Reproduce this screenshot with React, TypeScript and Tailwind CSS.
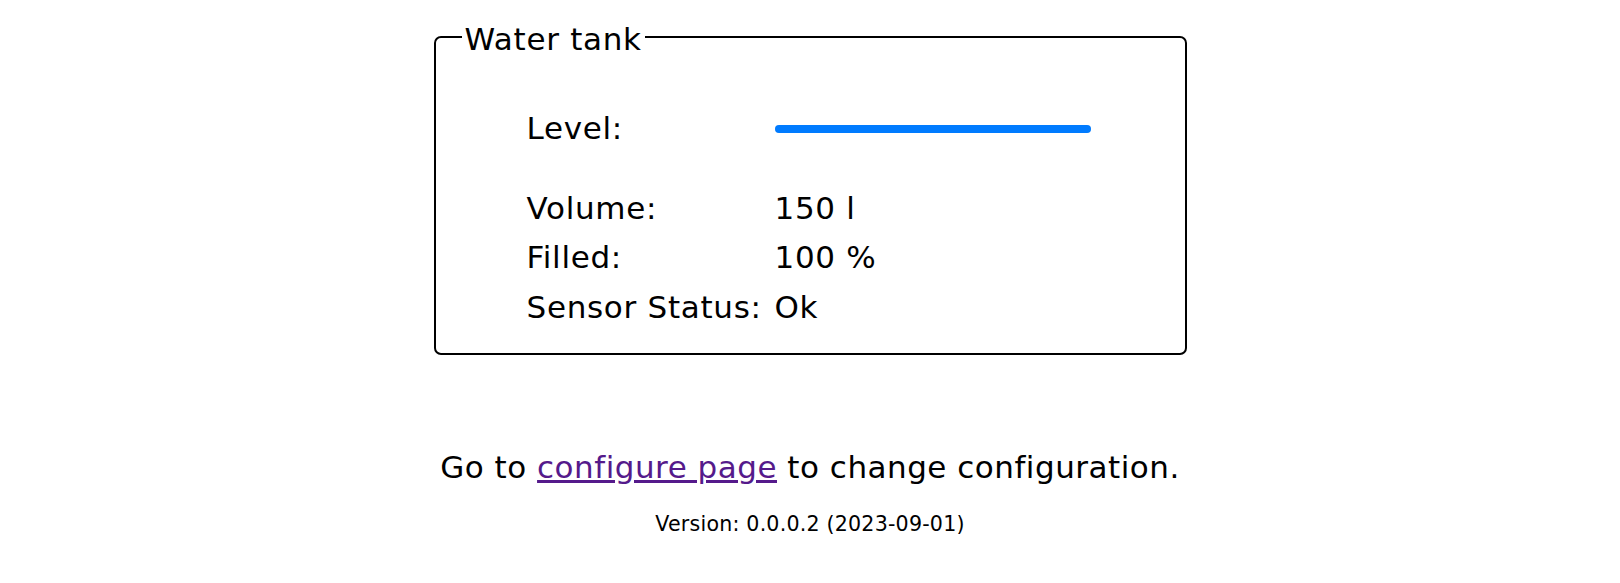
const rows = [
  { label: "Volume:", value: "150 l" },
  { label: "Filled:", value: "100 %" },
  { label: "Sensor Status:", value: "Ok" },
]

export default function App() {
  const level = 100
  return (
    <div className="min-h-[583px] bg-white pt-[19px] text-black font-['DejaVu_Sans',Verdana,sans-serif]">
      <fieldset className="mx-auto w-[753px] rounded-[7px] border-2 border-black p-0 pb-[21px]">
        <legend className="relative top-[2px] ml-[26px] px-[3px] text-[31px] leading-[36px] tracking-[0.7px]">
          Water tank
        </legend>
        <div className="pl-[91px] pt-[49px] text-[31px] leading-[49.5px] tracking-[0.7px]">
          <div className="grid grid-cols-[248px_auto] items-center">
            <div>Level:</div>
            <div className="h-[8px] w-[316px] rounded-full bg-[#e9ecef]">
              <div className="h-full rounded-full bg-[#007bff]" style={{ width: `${level}%` }} />
            </div>
          </div>
          <div className="mt-[30px] grid grid-cols-[248px_auto]">
            {rows.map((r) => (
              <div key={r.label} className="contents">
                <div>{r.label}</div>
                <div>{r.value}</div>
              </div>
            ))}
          </div>
        </div>
      </fieldset>

      <p className="mt-[94px] text-center text-[31px] leading-[36px] tracking-[0.5px]">
        Go to{" "}
        <a href="#" className="text-[#551a8b] underline">
          configure page
        </a>{" "}
        to change configuration.
      </p>
      <p className="mt-[27px] text-center text-[20.6px] leading-[24px] tracking-[0.2px]">
        Version: 0.0.0.2 (2023-09-01)
      </p>
    </div>
  )
}
